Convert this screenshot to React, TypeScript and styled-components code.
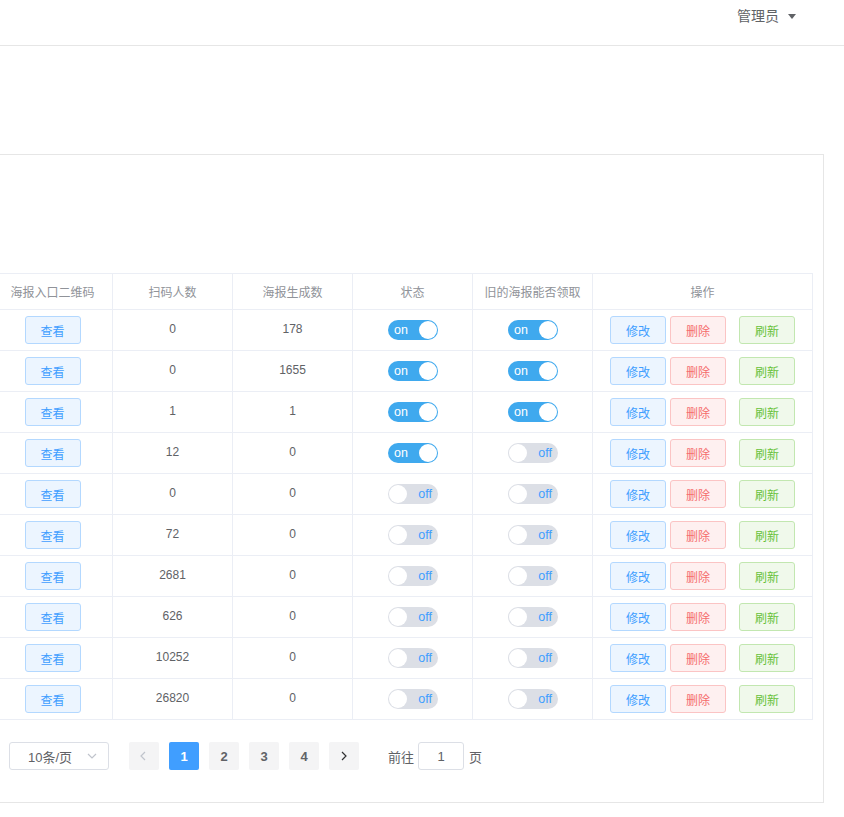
import styled, { createGlobalStyle } from "styled-components";

// Style >>>
const GlobalStyle = createGlobalStyle`
  html, body {
    margin: 0;
    padding: 0;
    background: #ffffff;
    overflow: hidden;
  }
  body {
    font-family: "Liberation Sans", "Noto Sans CJK SC", sans-serif;
    color: #606266;
  }
`;
const Page = styled.div`
  width: 844px;
  height: 817px;
  overflow: hidden;
`;
const TopBar = styled.header`
  height: 45px;
  border-bottom: 1px solid #e6e6e6;

  display: flex;
  align-items: flex-start;
  justify-content: flex-end;

  padding-right: 48px;
  box-sizing: content-box;
`;
const User = styled.div`
  display: flex;
  align-items: center;
  margin-top: 7px;

  font-size: 14px;
  line-height: 18px;
  color: #606266;
  cursor: pointer;
`;
const Caret = styled.span`
  width: 0;
  height: 0;
  margin-left: 9px;
  border-left: 4px solid transparent;
  border-right: 4px solid transparent;
  border-top: 5px solid #606266;
`;
const Main = styled.main`
  padding-top: 108px;
`;
const Panel = styled.section`
  width: 843px;
  margin-left: -19px;
  box-sizing: border-box;

  border: 1px solid #e6e6e6;
  background: #fff;

  padding: 118px 10px 32px 10px;
`;
const Table = styled.div`
  width: 821px;
  border-top: 1px solid #ebeef5;
  border-left: 1px solid #ebeef5;
  box-sizing: border-box;
`;
const Row = styled.div<{ $head?: boolean }>`
  display: grid;
  grid-template-columns: 120px 120px 120px 120px 120px 220px;
  height: ${({ $head }) => ($head ? 36 : 41)}px;
`;
const Cell = styled.div<{ $head?: boolean }>`
  display: flex;
  align-items: center;
  justify-content: center;
  gap: 4px;

  border-right: 1px solid #ebeef5;
  border-bottom: 1px solid #ebeef5;

  font-size: 12px;
  color: ${({ $head }) => ($head ? "#909399" : "#606266")};
`;
const Num = styled.span`
  margin-top: -3px;
`;
const tones = {
  primary: { bg: "#ecf5ff", border: "#b3d8ff", color: "#409eff" },
  danger: { bg: "#fef0f0", border: "#fbc4c4", color: "#f56c6c" },
  success: { bg: "#f0f9eb", border: "#c2e7b0", color: "#67c23a" },
};
type Tone = keyof typeof tones;
const Button = styled.button<{ $tone: Tone; $gap?: number }>`
  width: 56px;
  height: 28px;
  box-sizing: border-box;
  margin-left: ${({ $gap }) => $gap ?? 0}px;

  font-family: inherit;
  font-size: 12px;
  padding: 0;
  border-radius: 3px;
  border: 1px solid ${({ $tone }) => tones[$tone].border};
  background: ${({ $tone }) => tones[$tone].bg};
  color: ${({ $tone }) => tones[$tone].color};
  cursor: pointer;
`;
const Switch = styled.div<{ $on: boolean }>`
  position: relative;
  width: 50px;
  height: 20px;
  box-sizing: border-box;
  border-radius: 10px;
  background: ${({ $on }) => ($on ? "#3fa9ee" : "#dcdfe6")};

  display: flex;
  align-items: center;
  justify-content: ${({ $on }) => ($on ? "flex-start" : "flex-end")};
  padding: 0 6px;

  font-size: 12.5px;
  color: ${({ $on }) => ($on ? "#ffffff" : "#409eff")};
  margin-left: 1px;
`;
const Knob = styled.span<{ $on: boolean }>`
  position: absolute;
  top: 1px;
  left: ${({ $on }) => ($on ? 31 : 1)}px;
  width: 18px;
  height: 18px;
  border-radius: 50%;
  background: #fff;
`;
const Pager = styled.div`
  display: flex;
  align-items: center;
  height: 28px;
  margin-top: 22px;
  padding-left: 17px;
  font-size: 13px;
  color: #606266;
`;
const Select = styled.div`
  width: 100px;
  height: 28px;
  box-sizing: border-box;
  border: 1px solid #dcdfe6;
  border-radius: 3px;

  display: flex;
  align-items: center;
  justify-content: space-between;
  padding: 0 10px 0 18px;
  margin-right: 20px;
`;
const PageBtn = styled.div<{ $active?: boolean; $muted?: boolean }>`
  width: 30px;
  height: 28px;
  margin-right: 10px;
  border-radius: 2px;

  display: flex;
  align-items: center;
  justify-content: center;

  font-weight: 700;
  font-size: 13px;
  background: ${({ $active }) => ($active ? "#409eff" : "#f4f4f5")};
  color: ${({ $active, $muted }) =>
    $active ? "#fff" : $muted ? "#c0c4cc" : "#606266"};
`;
const Jump = styled.div`
  display: flex;
  align-items: center;
  margin-left: 19px;
  gap: 6px;
`;
const JumpInput = styled.div`
  width: 46px;
  height: 28px;
  box-sizing: border-box;
  border: 1px solid #dcdfe6;
  border-radius: 3px;

  display: flex;
  align-items: center;
  justify-content: center;
  margin: 0 -1px 0 -2px;
`;
// Style <<<

const rows: [string, string, boolean, boolean][] = [
  ["0", "178", true, true],
  ["0", "1655", true, true],
  ["1", "1", true, true],
  ["12", "0", true, false],
  ["0", "0", false, false],
  ["72", "0", false, false],
  ["2681", "0", false, false],
  ["626", "0", false, false],
  ["10252", "0", false, false],
  ["26820", "0", false, false],
];

const heads = ["海报入口二维码", "扫码人数", "海报生成数", "状态", "旧的海报能否领取", "操作"];

const Toggle = ({ on }: { on: boolean }) => (
  <Switch $on={on}>
    {on ? "on" : "off"}
    <Knob $on={on} />
  </Switch>
);

const Chevron = ({ dir, color }: { dir: "left" | "right" | "down"; color: string }) => {
  const d =
    dir === "left" ? "M7 2 L3 6 L7 10" : dir === "right" ? "M4 2 L8 6 L4 10" : "M2 4 L6 8 L10 4";
  return (
    <svg width="12" height="12" viewBox="0 0 12 12">
      <path d={d} fill="none" stroke={color} strokeWidth="1.2" />
    </svg>
  );
};

const App = () => {
  return (
    <Page>
      <GlobalStyle />
      <TopBar>
        <User>
          管理员
          <Caret />
        </User>
      </TopBar>
      <Main>
        <Panel>
          <Table>
            <Row $head>
              {heads.map((h) => (
                <Cell $head key={h}>
                  {h}
                </Cell>
              ))}
            </Row>
            {rows.map(([scan, made, state, old], i) => (
              <Row key={i}>
                <Cell>
                  <Button $tone="primary">查看</Button>
                </Cell>
                <Cell>
                  <Num>{scan}</Num>
                </Cell>
                <Cell>
                  <Num>{made}</Num>
                </Cell>
                <Cell>
                  <Toggle on={state} />
                </Cell>
                <Cell>
                  <Toggle on={old} />
                </Cell>
                <Cell>
                  <Button $tone="primary">修改</Button>
                  <Button $tone="danger">删除</Button>
                  <Button $tone="success" $gap={9}>
                    刷新
                  </Button>
                </Cell>
              </Row>
            ))}
          </Table>
          <Pager>
            <Select>
              10条/页
              <Chevron dir="down" color="#c0c4cc" />
            </Select>
            <PageBtn $muted>
              <Chevron dir="left" color="#c0c4cc" />
            </PageBtn>
            <PageBtn $active>1</PageBtn>
            <PageBtn>2</PageBtn>
            <PageBtn>3</PageBtn>
            <PageBtn>4</PageBtn>
            <PageBtn>
              <Chevron dir="right" color="#303133" />
            </PageBtn>
            <Jump>
              前往
              <JumpInput>1</JumpInput>
              页
            </Jump>
          </Pager>
        </Panel>
      </Main>
    </Page>
  );
};

export default App;
